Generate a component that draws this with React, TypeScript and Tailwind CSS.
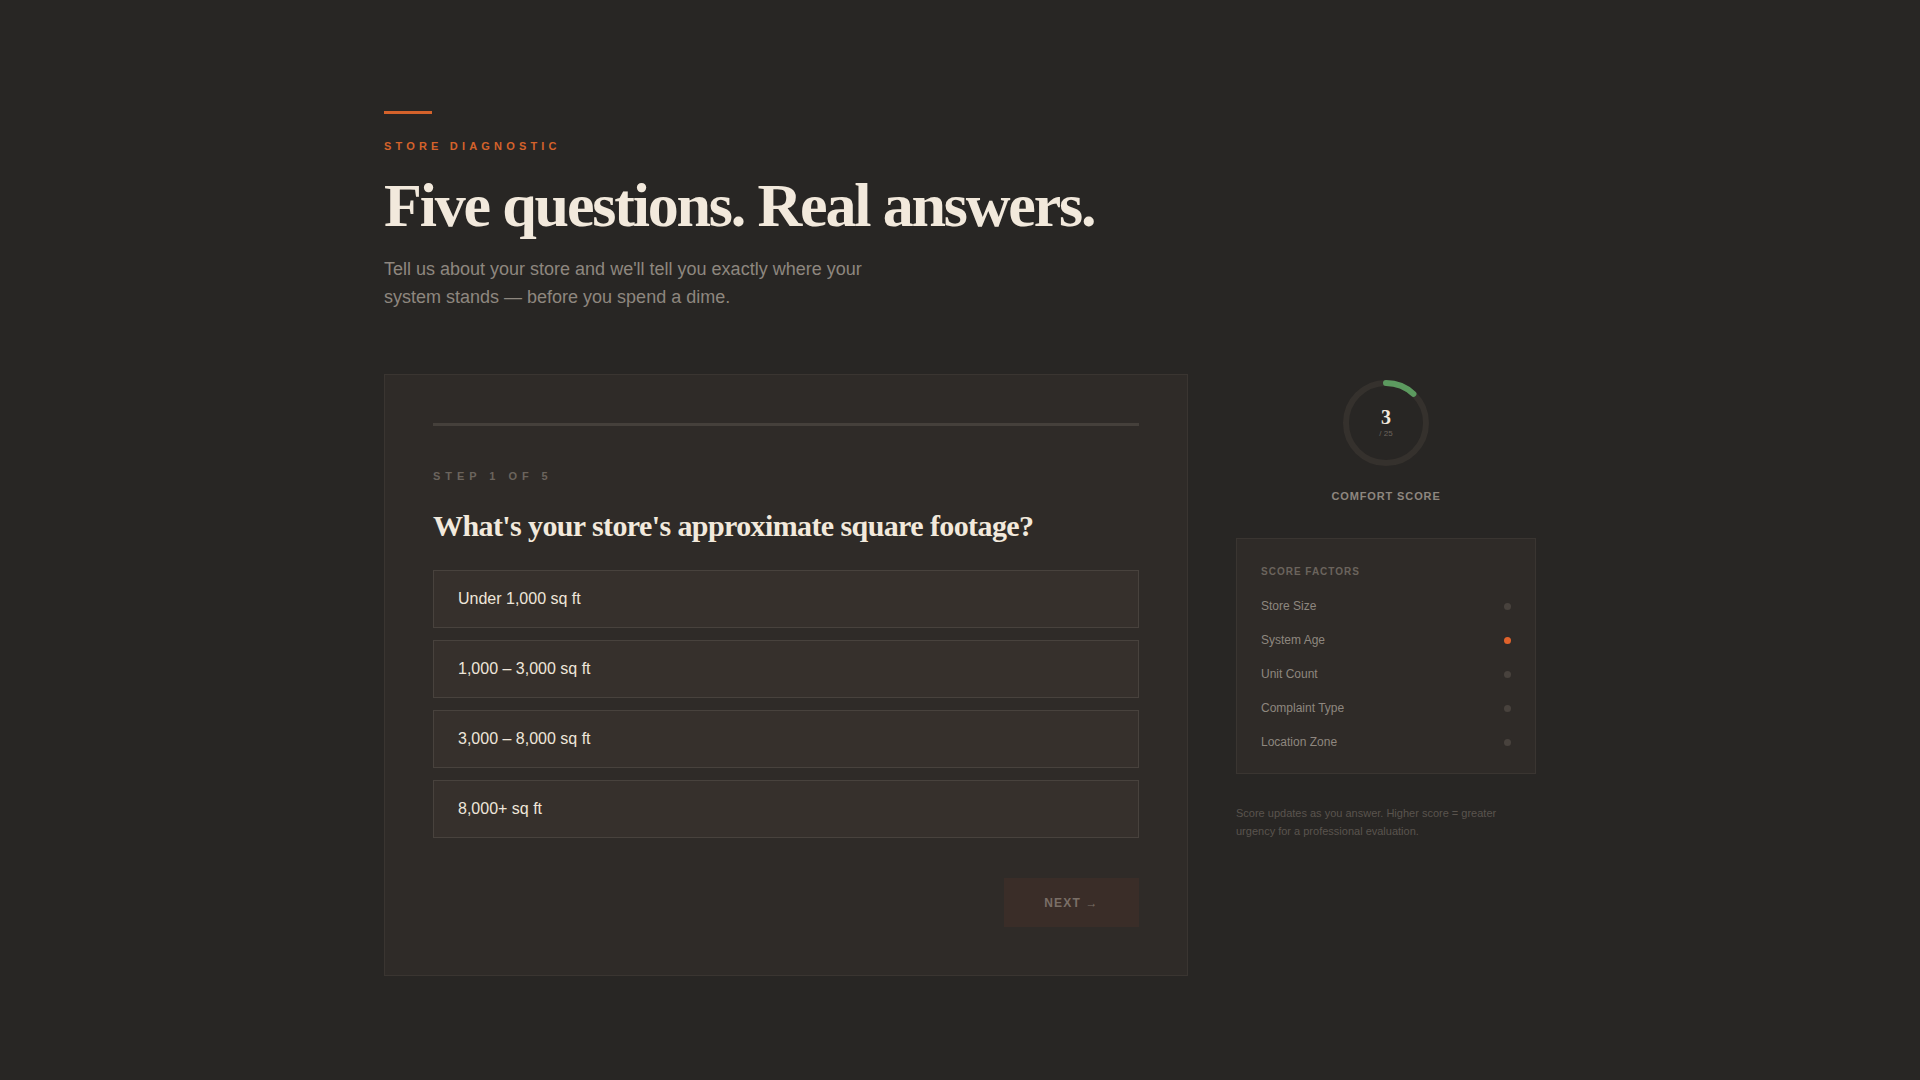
import React from "react";

const opts = ["Under 1,000 sq ft", "1,000 – 3,000 sq ft", "3,000 – 8,000 sq ft", "8,000+ sq ft"];
const factors = [
  ["Store Size", false],
  ["System Age", true],
  ["Unit Count", false],
  ["Complaint Type", false],
  ["Location Zone", false],
] as const;

export default function App() {
  const sans = { fontFamily: '"Liberation Sans", Arial, sans-serif' };
  const serif = { fontFamily: '"Liberation Serif", "Times New Roman", serif' };
  const r = 40;
  const c = 2 * Math.PI * r;
  return (
    <div className="min-h-screen w-full bg-[#282624]" style={sans}>
      <div className="pl-[384px] pt-[111px]">
        <div className="h-[3px] w-[48px] bg-[#d4622b]" />
        <div className="mt-[24px] text-[11px] font-bold tracking-[0.38em] text-[#d4622b]">STORE DIAGNOSTIC</div>
        <h1 className="mt-[14px] text-[62px] leading-[72px] font-bold tracking-[-0.035em] text-[#f2e9dc]" style={serif}>
          Five questions. Real answers.
        </h1>
        <p className="mt-[14px] w-[500px] text-[18px] leading-[28px] text-[#8e877f]">
          Tell us about your store and we'll tell you exactly where your system stands — before you spend a dime.
        </p>
        <div className="mt-[63px] flex gap-[48px]">
          <div className="w-[804px] border border-[#3a3531] bg-[#2f2b28] px-[48px] pt-[48px] pb-[48px]">
            <div className="h-[3px] w-full bg-[#45403b]" />
            <div className="mt-[42px] text-[11px] font-bold tracking-[0.45em] text-[#6b645d]">STEP 1 OF 5</div>
            <h2 className="mt-[22px] text-[30px] leading-[40px] font-bold tracking-[-0.02em] text-[#f2e9dc]" style={serif}>
              What's your store's approximate square footage?
            </h2>
            <div className="mt-[24px] flex flex-col gap-[12px]">
              {opts.map((o) => (
                <div key={o} className="flex h-[58px] items-center border border-[#48423d] bg-[#36302c] px-[24px] text-[16px] text-[#efe6da]">
                  {o}
                </div>
              ))}
            </div>
            <div className="mt-[40px] flex justify-end">
              <div className="flex h-[49px] w-[135px] items-center justify-center bg-[#3a2d28] text-[12px] font-bold tracking-[0.1em] text-[#7a6f67]">
                NEXT →
              </div>
            </div>
          </div>
          <div className="w-[300px]">
            <div className="flex flex-col items-center pt-[4px]">
              <div className="relative h-[90px] w-[90px]">
                <svg width="90" height="90" viewBox="0 0 90 90" className="-rotate-90">
                  <circle cx="45" cy="45" r={r} fill="none" stroke="#35312d" strokeWidth="6" />
                  <circle cx="45" cy="45" r={r} fill="none" stroke="#5c9a5f" strokeWidth="6" strokeLinecap="round" strokeDasharray={`${(c * 3) / 25} ${c}`} />
                </svg>
                <div className="absolute inset-0 flex flex-col items-center justify-center">
                  <div className="text-[20px] leading-[22px] font-bold text-[#f2e9dc]" style={serif}>3</div>
                  <div className="text-[8px] text-[#6b645d]">/ 25</div>
                </div>
              </div>
              <div className="mt-[20px] text-[11px] font-bold tracking-[0.08em] text-[#8e877f]">COMFORT SCORE</div>
            </div>
            <div className="mt-[34px] border border-[#3a3531] bg-[#2f2b28] px-[24px] pt-[25px] pb-[14px]">
              <div className="text-[10px] font-bold tracking-[0.1em] text-[#6b645d]">SCORE FACTORS</div>
              <div className="mt-[10px] flex flex-col">
                {factors.map(([n, on]) => (
                  <div key={n} className="flex h-[34px] items-center justify-between text-[12px] text-[#8e877f]">
                    <span>{n}</span>
                    <span className={`h-[7px] w-[7px] rounded-full ${on ? "bg-[#e0622b]" : "bg-[#48423d]"}`} />
                  </div>
                ))}
              </div>
            </div>
            <p className="mt-[30px] w-[290px] text-[11px] leading-[18px] text-[#5a544e]">
              Score updates as you answer. Higher score = greater urgency for a professional evaluation.
            </p>
          </div>
        </div>
      </div>
    </div>
  );
}
